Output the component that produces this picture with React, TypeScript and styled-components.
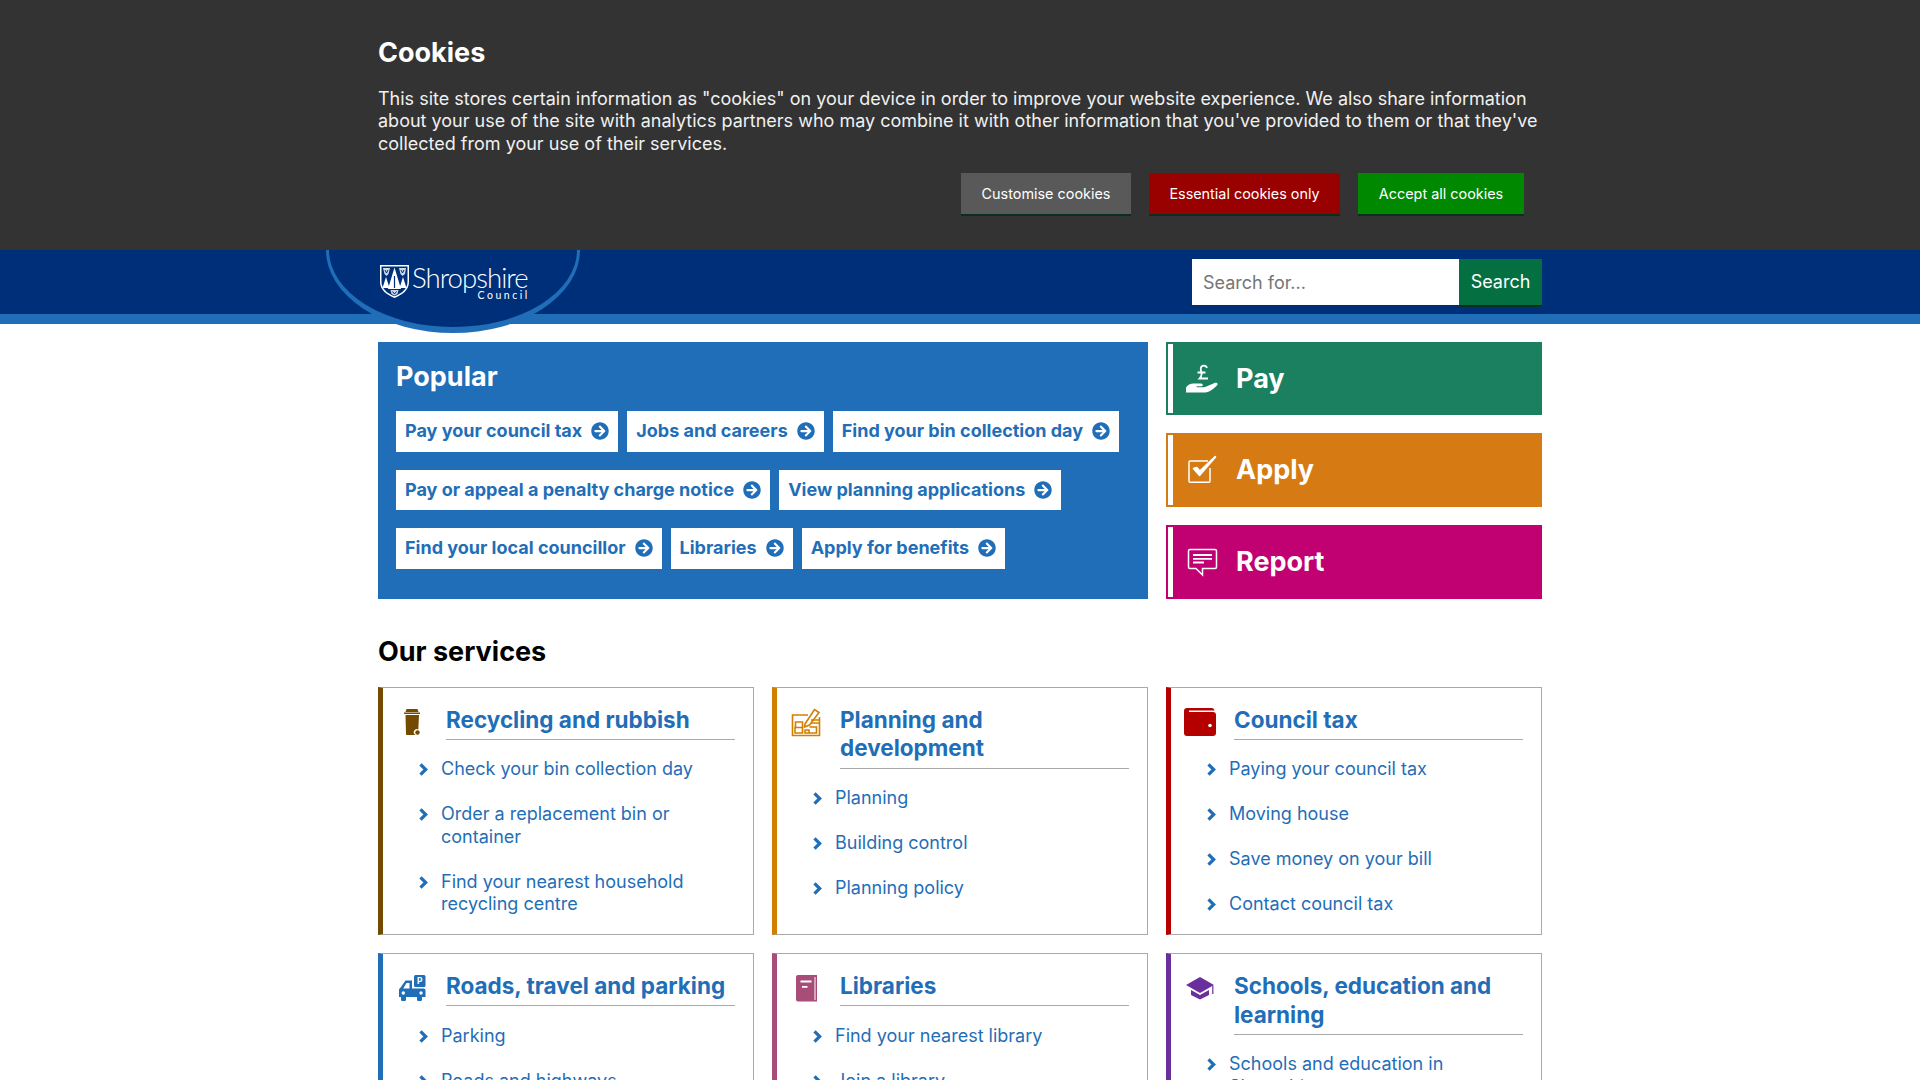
import React from 'react';
import styled, { createGlobalStyle } from 'styled-components';
import { FaArrowCircleRight } from 'react-icons/fa';

const BLUE = '#1f6eb7';
const NAVY = '#002f79';

const GlobalStyle = createGlobalStyle`
  * { box-sizing: border-box; }
  html, body { margin: 0; padding: 0; }
  body {
    background: #fff;
    color: #000;
    font-family: Inter, 'Liberation Sans', sans-serif;
    font-size: 18px;
    line-height: 22.5px;
    overflow-x: hidden;
  }
  a { text-decoration: none; }
`;

const Container = styled.div`
  width: 1164px;
  margin: 0 auto;
`;

const CookieBanner = styled.section`
  position: relative;
  z-index: 2;
  height: 250px;
  padding-top: 36px;
  background: #333;
  color: #fff;
`;

const CookieTitle = styled.h2`
  margin: 0 0 18.8px;
  font-size: 27px;
  line-height: 33px;
  font-weight: 700;
`;

const CookieText = styled.p`
  margin: 0 0 17.5px;
  color: #f0f0f0;
`;

const CookieActions = styled.div`
  display: flex;
  justify-content: flex-end;
  gap: 18px;
  padding-right: 18px;
`;

const CookieButton = styled.button<{ $bg: string; $w: number }>`
  width: ${(p) => p.$w}px;
  height: 43px;
  padding: 0;
  border: 0;
  border-bottom: 2px solid #0b2e1e;
  background: ${(p) => p.$bg};
  color: #fff;
  font: 400 14.4px Inter, sans-serif;
`;

const Header = styled.header`
  position: relative;
  height: 74px;
  background: ${NAVY};
  border-bottom: 10px solid ${BLUE};
`;

const HeaderRow = styled(Container)`
  display: flex;
  justify-content: flex-end;
  padding-top: 9px;
`;

const LogoBadge = styled.a`
  position: absolute;
  top: 0;
  left: 326px;
  width: 254px;
  height: 83px;
  display: flex;
  align-items: flex-start;
  padding: 15px 0 0 51px;
  gap: 3px;
  background: ${NAVY};
  border: solid ${BLUE};
  border-width: 0 3px 6px;
  border-radius: 0 0 127px 127px / 0 0 83px 83px;
`;

const LogoWords = styled.span`
  display: flex;
  flex-direction: column;
  align-items: flex-end;
  margin-top: -1px;
  color: #fff;
  font-family: Lato, sans-serif;
`;

const LogoName = styled.span`
  font-size: 27.6px;
  font-weight: 300;
  line-height: 27px;
  letter-spacing: -1px;
`;

const LogoCouncil = styled.span`
  margin: -1px -2px 0 0;
  font-size: 10.5px;
  line-height: 10px;
  font-weight: 400;
  letter-spacing: 2.5px;
`;

const SearchInput = styled.input`
  width: 267px;
  height: 46px;
  padding: 0 11px;
  border: 0;
  border-radius: 0;
  outline: 0;
  background: #fff;
  font: 400 18px Inter, sans-serif;

  &::placeholder {
    color: #757575;
    opacity: 1;
  }
`;

const SearchButton = styled.button`
  width: 83px;
  height: 48px;
  padding: 0 0 2px;
  border: 0;
  border-bottom: 2px solid #0b2e1e;
  background: #046f41;
  color: #fff;
  font: 400 18px Inter, sans-serif;
`;

const TopGrid = styled(Container)`
  display: grid;
  grid-template-columns: 770px 376px;
  column-gap: 18px;
  margin-top: 18px;
`;

const PopularPanel = styled.section`
  height: 257px;
  padding: 18px;
  background: ${BLUE};
`;

const PopularTitle = styled.h2`
  margin: 0 0 17px;
  color: #fff;
  font-size: 27px;
  line-height: 34px;
  font-weight: 700;
`;

const PopularLinks = styled.div`
  display: flex;
  flex-wrap: wrap;
  gap: 18px 9px;
`;

const PopularLink = styled.a`
  display: flex;
  align-items: center;
  gap: 9px;
  height: 40.5px;
  padding: 0 9px;
  background: #fff;
  color: ${BLUE};
  font-size: 18px;
  font-weight: 700;
`;

const ActionColumn = styled.div`
  display: grid;
  grid-template-rows: 73px 74px 74px;
  row-gap: 18px;
`;

const ActionTile = styled.a<{ $bg: string }>`
  display: flex;
  align-items: center;
  gap: 18px;
  padding-left: 18px;
  background: ${(p) => p.$bg};
  border: 2px solid ${(p) => p.$bg};
  color: #fff;
  font-size: 27px;
  line-height: 36px;
  font-weight: 700;
  box-shadow: inset 5px 0 0 #fff;
`;

const ServicesTitle = styled.h2`
  margin: 36px 0 18px;
  font-size: 27px;
  line-height: 34px;
  font-weight: 700;
`;

const ServiceGrid = styled.div`
  display: grid;
  grid-template-columns: repeat(3, 376px);
  gap: 18.4px 18px;
`;

const ServiceCard = styled.article<{ $accent: string }>`
  padding: 18px 18px 18px 13px;
  border: 1px solid #aaa;
  border-left: 5px solid ${(p) => p.$accent};
`;

const CardHead = styled.div`
  display: flex;
  align-items: flex-start;
  gap: 18px;
`;

const CardIcon = styled.svg`
  flex: none;
  width: 32px;
  height: 32px;
`;

const CardTitle = styled.h3`
  flex: 1;
  margin: 0;
  padding-bottom: 4.7px;
  border-bottom: 1px solid #aaa;
  color: ${BLUE};
  font-size: 22.5px;
  line-height: 28.4px;
  font-weight: 700;
`;

const LinkList = styled.ul`
  margin: 18.3px 0 0 23px;
  padding: 0;
  list-style: none;
`;

const LinkItem = styled.li`
  display: flex;
  align-items: flex-start;
  gap: 13px;
  margin-bottom: 22.5px;
  color: ${BLUE};

  &:last-child {
    margin-bottom: 0;
  }
`;

const Chevron = styled.svg`
  flex: none;
  width: 9px;
  height: 13px;
  margin-top: 5px;
`;

const ActionIcon = styled.svg`
  flex: none;
  width: 32px;
  height: 32px;
`;

const popularLinks = [
  'Pay your council tax',
  'Jobs and careers',
  'Find your bin collection day',
  'Pay or appeal a penalty charge notice',
  'View planning applications',
  'Find your local councillor',
  'Libraries',
  'Apply for benefits',
];

const ShieldLogo = () => (
  <svg width="29" height="33" viewBox="0 0 29 33" aria-hidden="true">
    <path d="M0 0h29v17c0 8-7 13-14.500 16C7 30 0 25 0 17z" fill="#fff" />
    <path d="M1.500 1.500h26V17c0 7-6 11.500-13 14.300C7.500 28.500 1.500 24 1.500 17z" fill={NAVY} />
    <path d="M14.500 2.500L21 24H8zM6 12L9.500 23H2.500zM23 12L26.500 23H19.500z" fill="#fff" />
    <path d="M14.500 11v12" stroke={NAVY} strokeWidth="1.200" />
    <path d="M3 3h7l-1.500 6L6.500 11 4.500 9zM19 3h7l-1 6-2.500 2L20.500 9zM10.500 25h8l-1 4-3 1.500-3-1.500z" fill="#cfd9ea" />
    <path d="M5 5l1.500 3L8 5M21 5l1.500 3L24 5M12.500 26.500l2 2.500 2-2.500" fill="none" stroke={NAVY} strokeWidth="1" />
  </svg>
);

const PayIcon = () => (
  <ActionIcon viewBox="0 0 32 32" fill="#fff">
    <path
      d="M21 5C20 1.800 15.200 1.800 14.800 5.500c-.2 2 .8 3.500.8 5.500 0 1.800-1 3.300-2.100 4.500H22M11.500 9.500h8"
      fill="none"
      stroke="#fff"
      strokeWidth="1.800"
    />
    <path d="M0 24.500c2-3.500 5.500-4.500 9-4h6c2 0 2.600 2.400.4 2.800H11c-.7 0-.7 1 0 1h6.500c3-.3 7-2.800 11.500-4.500 2-.7 3.600 1 2.200 2.400-3.500 3.300-7.500 6.800-12 7.300H0z" />
  </ActionIcon>
);

const ApplyIcon = () => (
  <ActionIcon viewBox="0 0 32 32" fill="none" stroke="#fff">
    <path d="M24 14v13.200a1 1 0 0 1-1 1H4a1 1 0 0 1-1-1V8a1 1 0 0 1 1-1h18" strokeWidth="1.500" />
    <path d="M7.500 14.500l6 7L29.500 3l-.3-.4L13.800 17l-3-3.500z" fill="#fff" strokeWidth="1.600" strokeLinejoin="round" />
  </ActionIcon>
);

const ReportIcon = () => (
  <ActionIcon viewBox="0 0 32 32" fill="none" stroke="#fff">
    <path
      d="M4 3.500h25A1.500 1.500 0 0 1 30.500 5v16a1.500 1.500 0 0 1-1.500 1.500H16.500V29L10 22.500H4A1.500 1.500 0 0 1 2.500 21V5A1.500 1.500 0 0 1 4 3.500z"
      strokeWidth="1.500"
    />
    <path d="M7 9h19M7 12.800h19M7 16.500h11" strokeWidth="1.800" />
  </ActionIcon>
);

const ChevronIcon = () => (
  <Chevron viewBox="0 0 9 13" fill="none" stroke={BLUE} strokeWidth="3.200">
    <path d="M1.500 1.300L6.700 6.500 1.500 11.700" />
  </Chevron>
);

const BinIcon = ({ c }: { c: string }) => (
  <CardIcon viewBox="0 0 32 32">
    <path d="M10.500 3h11l1 3h-13z" fill={c} />
    <rect x="8" y="6.500" width="16" height="1.500" fill={c} />
    <path d="M9.500 9h13.500l-.7 14.500a2.800 2.800 0 0 0-2.800 5.500H11c-.7 0-1-.5-1-1z" fill={c} />
    <circle cx="21.500" cy="26.500" r="2.200" fill={c} />
  </CardIcon>
);

const PlanIcon = ({ c }: { c: string }) => (
  <CardIcon viewBox="0 0 32 32" fill="none" stroke={c} strokeWidth="1.600">
    <path d="M18 9H2.500v20.500h27V11" />
    <path d="M5 27v-5.500h7.500V27zM12.500 21.500V16H5.500v5.500M15 27v-3h4v3zM19 27h7.500v-6h-7" />
    <path d="M15 18l9.500-14.500 4.500 3L19.500 19l-5 2z" />
    <path d="M21 14h8M21 17h8" />
  </CardIcon>
);

const WalletIcon = ({ c }: { c: string }) => (
  <CardIcon viewBox="0 0 32 32">
    <path d="M3 2h25a3 3 0 0 1 2.500 2.500H5v1.500h24a3 3 0 0 1 3 3v18a3 3 0 0 1-3 3H3a3 3 0 0 1-3-3V5a3 3 0 0 1 3-3z" fill={c} />
    <circle cx="26" cy="19.500" r="1.800" fill="#fff" />
  </CardIcon>
);

const RoadsIcon = ({ c }: { c: string }) => (
  <CardIcon viewBox="0 0 32 32">
    <rect x="18" y="3" width="11.500" height="12" rx="1.500" fill={c} />
    <text x="23.700" y="12" textAnchor="middle" fontSize="8.500" fontWeight="700" fontFamily="Inter, sans-serif" fill="#fff">
      P
    </text>
    <path
      d="M9.500 8.500H16v8h11.500c1.200 0 2 .8 2 2v6.500H3v-7c0-1 .5-1.500 1.200-2zM10.500 11l-3.300 5.500H13.500V11z"
      fill={c}
      fillRule="evenodd"
    />
    <path d="M5 25h5v2.700a1.300 1.300 0 0 1-1.300 1.300H6.300A1.300 1.300 0 0 1 5 27.700zM21 25h5v2.700a1.300 1.300 0 0 1-1.300 1.300h-2.400a1.300 1.300 0 0 1-1.300-1.300z" fill={c} />
    <circle cx="7.300" cy="21" r="1.700" fill="#fff" />
    <circle cx="25" cy="21" r="1.700" fill="#fff" />
  </CardIcon>
);

const BookIcon = ({ c }: { c: string }) => (
  <CardIcon viewBox="0 0 32 32">
    <path d="M8 3h19v26.500H8a2 2 0 0 1-2-2V5a2 2 0 0 1 2-2z" fill={c} />
    <path d="M25 5v23" stroke="#fff" strokeWidth="1" />
    <path d="M10.500 8.500h11v2h-11zM12 14h5.500v1.800H12z" fill="#fff" />
  </CardIcon>
);

const CapIcon = ({ c }: { c: string }) => (
  <CardIcon viewBox="0 0 32 32">
    <path d="M16 5l14 8-14 8-14-8z" fill={c} />
    <path d="M7 18l9 5 9-5v5l-9 4.500L7 23z" fill={c} />
    <path d="M28.800 14v8" stroke={c} strokeWidth="1.200" />
  </CardIcon>
);

const services = [
  {
    title: 'Recycling and rubbish',
    accent: '#734a00',
    Icon: BinIcon,
    links: ['Check your bin collection day', 'Order a replacement bin or container', 'Find your nearest household recycling centre'],
  },
  {
    title: 'Planning and development',
    accent: '#d27f00',
    Icon: PlanIcon,
    links: ['Planning', 'Building control', 'Planning policy'],
  },
  {
    title: 'Council tax',
    accent: '#b50000',
    Icon: WalletIcon,
    links: ['Paying your council tax', 'Moving house', 'Save money on your bill', 'Contact council tax'],
  },
  {
    title: 'Roads, travel and parking',
    accent: BLUE,
    Icon: RoadsIcon,
    links: ['Parking', 'Roads and highways', 'Public transport'],
  },
  {
    title: 'Libraries',
    accent: '#a84d78',
    Icon: BookIcon,
    links: ['Find your nearest library', 'Join a library', 'Search the catalogue'],
  },
  {
    title: 'Schools, education and learning',
    accent: '#6a2f9c',
    Icon: CapIcon,
    links: ['Schools and education in Shropshire', 'School admissions'],
  },
];

export default function App() {
  return (
    <>
      <GlobalStyle />
      <CookieBanner>
        <Container>
          <CookieTitle>Cookies</CookieTitle>
          <CookieText>
            This site stores certain information as "cookies" on your device in order to improve your website experience. We also share
            information about your use of the site with analytics partners who may combine it with other information that you've provided
            to them or that they've collected from your use of their services.
          </CookieText>
          <CookieActions>
            <CookieButton $bg="#595959" $w={170}>Customise cookies</CookieButton>
            <CookieButton $bg="#990000" $w={191}>Essential cookies only</CookieButton>
            <CookieButton $bg="#008800" $w={166}>Accept all cookies</CookieButton>
          </CookieActions>
        </Container>
      </CookieBanner>

      <Header>
        <LogoBadge href="#">
          <ShieldLogo />
          <LogoWords>
            <LogoName>Shropshire</LogoName>
            <LogoCouncil>Council</LogoCouncil>
          </LogoWords>
        </LogoBadge>
        <HeaderRow>
          <SearchInput placeholder="Search for..." />
          <SearchButton>Search</SearchButton>
        </HeaderRow>
      </Header>

      <TopGrid>
        <PopularPanel>
          <PopularTitle>Popular</PopularTitle>
          <PopularLinks>
            {popularLinks.map((label) => (
              <PopularLink href="#" key={label}>
                {label}
                <FaArrowCircleRight size={18} />
              </PopularLink>
            ))}
          </PopularLinks>
        </PopularPanel>
        <ActionColumn>
          <ActionTile href="#" $bg="#1a8060">
            <PayIcon />
            Pay
          </ActionTile>
          <ActionTile href="#" $bg="#d67a13">
            <ApplyIcon />
            Apply
          </ActionTile>
          <ActionTile href="#" $bg="#c10071">
            <ReportIcon />
            Report
          </ActionTile>
        </ActionColumn>
      </TopGrid>

      <Container>
        <ServicesTitle>Our services</ServicesTitle>
        <ServiceGrid>
          {services.map(({ title, accent, Icon, links }) => (
            <ServiceCard $accent={accent} key={title}>
              <CardHead>
                <Icon c={accent} />
                <CardTitle>{title}</CardTitle>
              </CardHead>
              <LinkList>
                {links.map((link) => (
                  <LinkItem key={link}>
                    <ChevronIcon />
                    <span>{link}</span>
                  </LinkItem>
                ))}
              </LinkList>
            </ServiceCard>
          ))}
        </ServiceGrid>
      </Container>
    </>
  );
}
